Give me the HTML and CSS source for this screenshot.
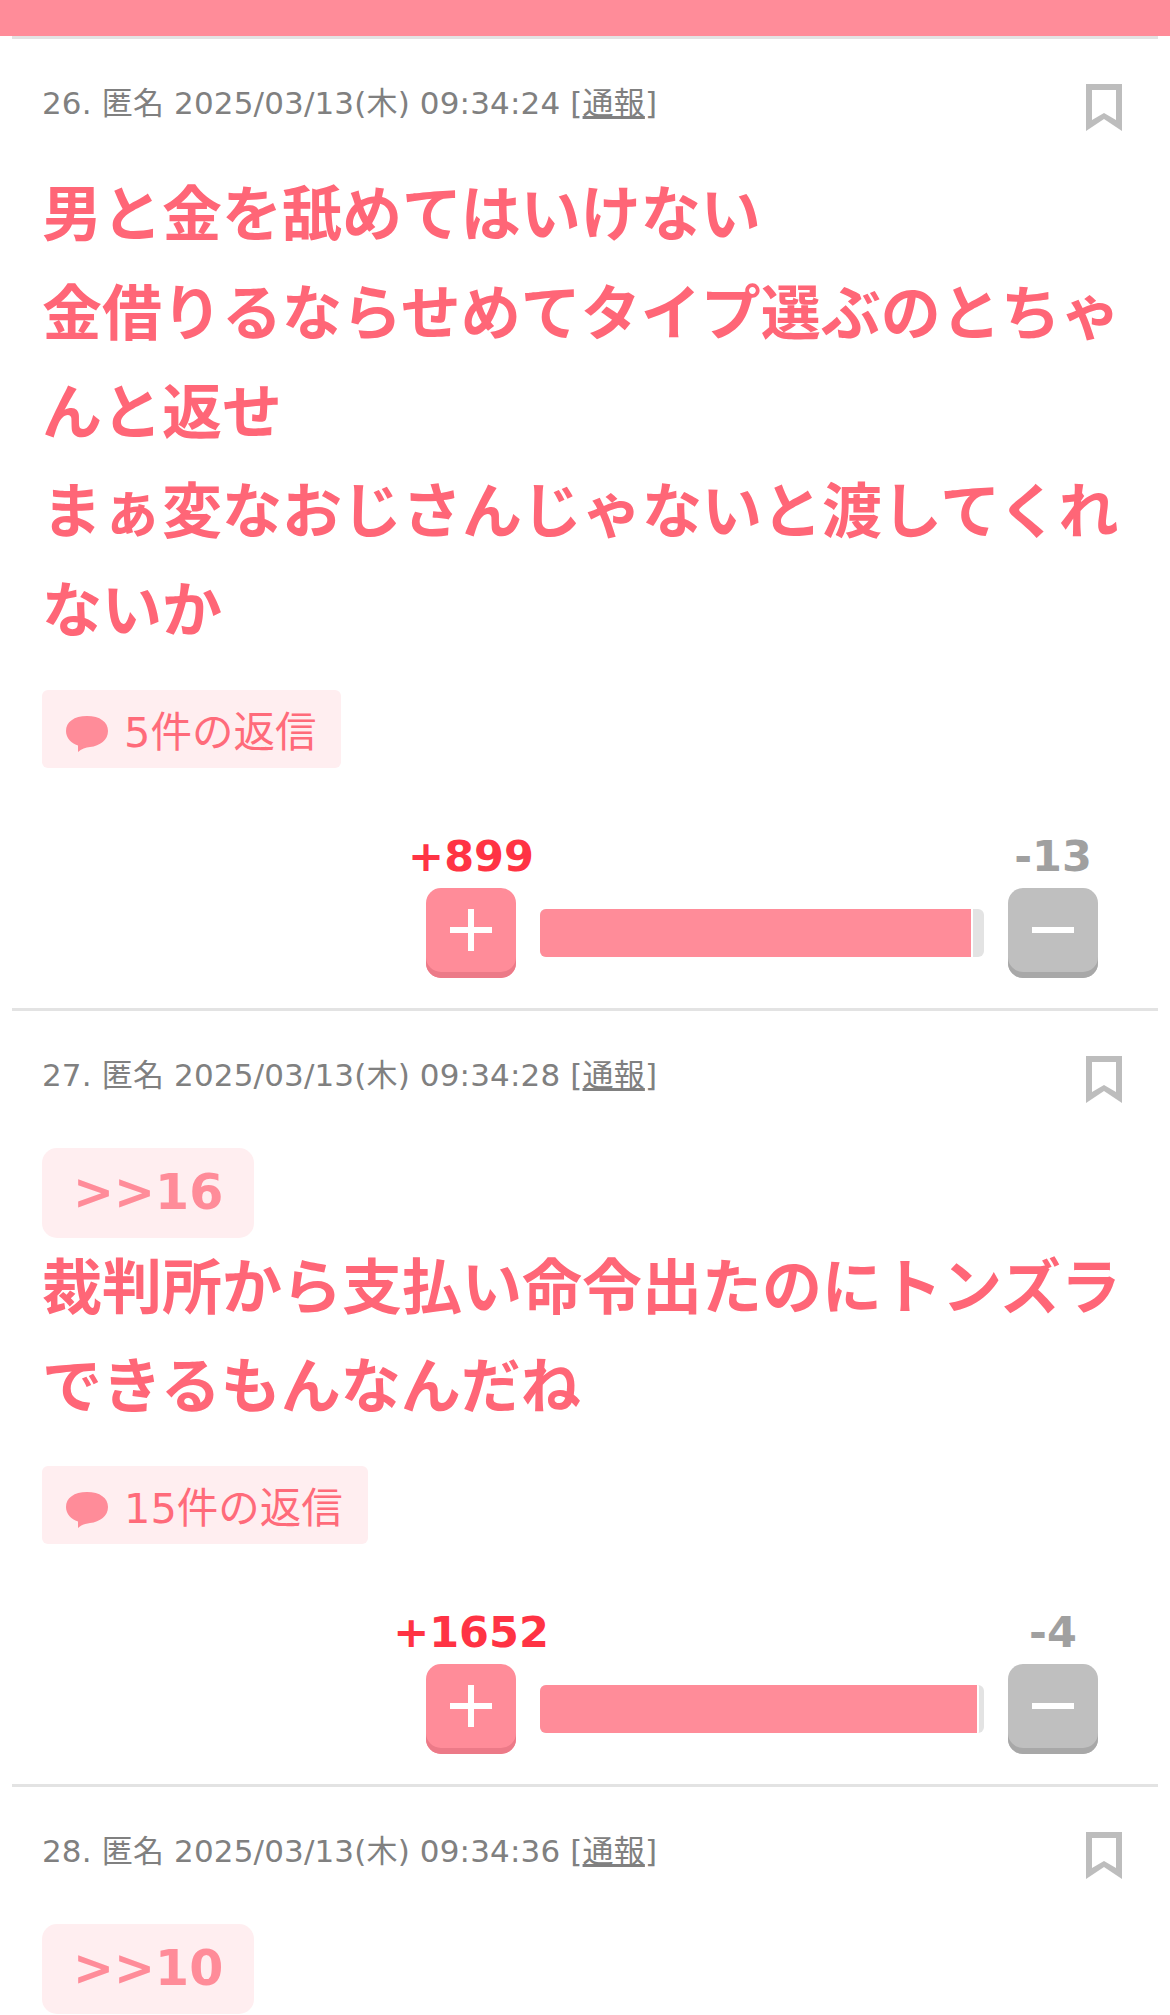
FILE: index.html
```html
<!DOCTYPE html>
<html lang="ja">

<head>
  <meta charset="UTF-8">
  <meta name="viewport" content="width=device-width, initial-scale=1.0">
  <title>コメント</title>
  <link rel="stylesheet" href="styles.css">
</head>

<body>
<div class="top-bar"></div>
<div class="comments">

  <!-- comment 26 -->
  <div class="comment">
    <div class="comment-meta">
      <span>26. 匿名 2025/03/13(木) 09:34:24 [<a class="report" href="#">通報</a>]</span>
      <svg class="bookmark" viewBox="0 0 36 47"><path fill-rule="evenodd" d="M0 0H36V47L18 35L0 47ZM6 6V36L18 29L30 36V6Z"/></svg>
    </div>
    <div class="comment-body">男と金を舐めてはいけない<br>金借りるならせめてタイプ選ぶのとちゃんと返せ<br>まぁ変なおじさんじゃないと渡してくれないか</div>
    <a class="replies" href="#">
      <svg class="reply-icon" viewBox="0 0 42 36"><path d="M21 0C34 0 42 6 42 15C42 24 34 30 24 31C20 31.5 15 33 12 36L12 29.5C5 27 0 22 0 15C0 6 8 0 21 0Z"/></svg>
      5件の返信
    </a>
    <div class="votes">
      <div class="vote">
        <span class="count count-plus">+899</span>
        <button class="vote-btn vote-plus"><span class="cross"></span></button>
      </div>
      <div class="bar"><div class="bar-fill" style="width: 431px"></div></div>
      <div class="vote">
        <span class="count count-minus">-13</span>
        <button class="vote-btn vote-minus"><span class="dash"></span></button>
      </div>
    </div>
  </div>

  <!-- comment 27 -->
  <div class="comment">
    <div class="comment-meta">
      <span>27. 匿名 2025/03/13(木) 09:34:28 [<a class="report" href="#">通報</a>]</span>
      <svg class="bookmark" viewBox="0 0 36 47"><path fill-rule="evenodd" d="M0 0H36V47L18 35L0 47ZM6 6V36L18 29L30 36V6Z"/></svg>
    </div>
    <a class="anchor" href="#">&gt;&gt;16</a>
    <div class="comment-body">裁判所から支払い命令出たのにトンズラできるもんなんだね</div>
    <a class="replies" href="#">
      <svg class="reply-icon" viewBox="0 0 42 36"><path d="M21 0C34 0 42 6 42 15C42 24 34 30 24 31C20 31.5 15 33 12 36L12 29.5C5 27 0 22 0 15C0 6 8 0 21 0Z"/></svg>
      15件の返信
    </a>
    <div class="votes">
      <div class="vote">
        <span class="count count-plus">+1652</span>
        <button class="vote-btn vote-plus"><span class="cross"></span></button>
      </div>
      <div class="bar"><div class="bar-fill" style="width: 437px"></div></div>
      <div class="vote">
        <span class="count count-minus">-4</span>
        <button class="vote-btn vote-minus"><span class="dash"></span></button>
      </div>
    </div>
  </div>

  <!-- comment 28 -->
  <div class="comment">
    <div class="comment-meta">
      <span>28. 匿名 2025/03/13(木) 09:34:36 [<a class="report" href="#">通報</a>]</span>
      <svg class="bookmark" viewBox="0 0 36 47"><path fill-rule="evenodd" d="M0 0H36V47L18 35L0 47ZM6 6V36L18 29L30 36V6Z"/></svg>
    </div>
    <a class="anchor" href="#">&gt;&gt;10</a>
  </div>

</div>
</body>

</html>
```

FILE: styles.css
```css
:root {
  --color-pink: #ff8c99;
  --color-pink-dark: #ff6677;
  --color-pink-light: #ffeef0;
  --color-line: #e3e3e3;
}

html,
body {
  height: 100%;
  overflow: hidden;
}

body {
  margin: 0;
  padding: 0;
  background-color: white;
  font-family: "DejaVu Sans", "Noto Sans CJK JP", sans-serif;
}

.top-bar {
  height: 36px;
  background-color: var(--color-pink);
}

.comments {
  margin: 0 12px;
  border-top: 3px solid var(--color-line);
}

.comment {
  padding: 45px 0 30px 30px;
  border-bottom: 3px solid var(--color-line);
}

.comment-meta {
  display: flex;
  justify-content: space-between;
  align-items: flex-start;
  height: 47px;
  padding-right: 36px;
  font-size: 31px;
  letter-spacing: 0.15px;
  line-height: 39px;
  color: #808080;
}

.report {
  color: #808080;
}

.bookmark {
  width: 36px;
  height: 47px;
  fill: #bdbdbd;
}

.comment-body {
  margin-top: 35px;
  width: 1086px;
  font-size: 60px;
  font-weight: bold;
  line-height: 99px;
  color: var(--color-pink-dark);
}

.anchor {
  display: block;
  width: 212px;
  height: 90px;
  margin-top: 45px;
  box-sizing: border-box;
  padding-left: 31px;
  background-color: var(--color-pink-light);
  border-radius: 15px;
  font-size: 49px;
  font-weight: bold;
  line-height: 90px;
  color: var(--color-pink);
  text-decoration: none;
}

.anchor + .comment-body {
  margin-top: 1px;
}

.replies {
  display: inline-flex;
  align-items: center;
  height: 78px;
  margin-top: 29px;
  padding: 0 25px 0 24px;
  gap: 16px;
  background-color: var(--color-pink-light);
  border-radius: 6px;
  font-size: 41.5px;
  color: #ff6b7a;
  text-decoration: none;
  vertical-align: top;
}

.reply-icon {
  width: 42px;
  height: 36px;
  margin-top: 10px;
  fill: var(--color-pink);
}

.votes {
  display: flex;
  justify-content: flex-end;
  align-items: flex-end;
  gap: 24px;
  margin-top: 66px;
  padding-right: 60px;
}

.vote {
  display: flex;
  flex-direction: column;
  align-items: center;
  width: 90px;
}

.count {
  padding-bottom: 9px;
  font-size: 43px;
  font-weight: bold;
  line-height: 45px;
  white-space: nowrap;
}

.count-plus {
  color: #ff3344;
}

.count-minus {
  color: #a0a0a0;
}

.vote-btn {
  display: flex;
  justify-content: center;
  align-items: center;
  width: 90px;
  height: 90px;
  padding: 0 0 6px;
  border: none;
  border-radius: 15px;
}

.vote-plus {
  background-color: var(--color-pink);
  box-shadow: inset 0 -6px 0 #ec7a88;
}

.vote-minus {
  background-color: #bfbfbf;
  box-shadow: inset 0 -6px 0 #a8a8a8;
}

.cross {
  position: relative;
  display: block;
  width: 42px;
  height: 6px;
  background-color: white;
}

.cross::after {
  content: "";
  position: absolute;
  left: 18px;
  top: -18px;
  width: 6px;
  height: 42px;
  background-color: white;
}

.dash {
  display: block;
  width: 42px;
  height: 6px;
  background-color: white;
}

.bar {
  width: 444px;
  height: 48px;
  margin-bottom: 21px;
  background-color: var(--color-line);
  border-radius: 6px;
  overflow: hidden;
}

.bar-fill {
  height: 100%;
  background-color: var(--color-pink);
  border-right: 2px solid white;
}
```
